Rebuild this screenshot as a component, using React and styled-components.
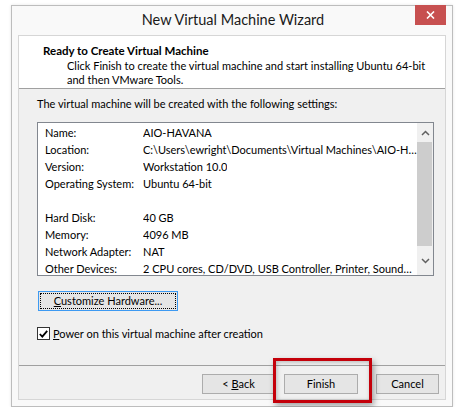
import React from "react";
import styled, { createGlobalStyle } from "styled-components";

const GlobalStyle = createGlobalStyle`
  body {
    margin: 0;
    background: #ffffff;
    font-family: Lato, "Noto Sans", sans-serif;
  }
`;

const Page = styled.div`
  padding: 5px 0 0 11px;
`;

// outer window frame
const Window = styled.div`
  position: relative;
  width: 440px;
  height: 400px;
  border: 1px solid #bdbdbd;
  background: #f9f9f9;
  box-shadow: 0 0 3px rgba(0, 0, 0, 0.1);
  display: flex;
  flex-direction: column;
`;

const TitleBar = styled.div`
  height: 29px;
  display: flex;
  align-items: flex-start;
  justify-content: center;
  position: relative;
`;

const Title = styled.span`
  font-size: 14.5px;
  color: #1a1a1a;
  margin-top: 5px;
  margin-left: 2px;
`;

const CloseBtn = styled.div`
  position: absolute;
  top: -1px;
  right: 6px;
  width: 31px;
  height: 20px;
  background: #c75050;
  color: #fff;
  display: flex;
  align-items: center;
  justify-content: center;
`;

const Client = styled.div`
  margin: 0 6px 6px 6px;
  flex: 1;
  border: 1px solid #d6d6d6;
  background: #f0f0f0;
  display: flex;
  flex-direction: column;
`;

const Header = styled.div`
  background: #ffffff;
  height: 53px;
  border-bottom: 1px solid #a0a0a0;
  padding: 7px 0 0 24px;
  box-sizing: border-box;
  white-space: nowrap;
`;

const HeaderTitle = styled.div`
  font-weight: bold;
  font-size: 11.5px;
  color: #000;
  line-height: 16px;
`;

const HeaderDesc = styled.div`
  font-size: 11px;
  color: #000;
  line-height: 14px;
  padding-left: 24px;
`;

const Body = styled.div`
  flex: 1;
  padding: 7px 10px 0 18px;
  font-size: 11px;
  color: #000;
`;

const Intro = styled.div`
  line-height: 16px;
`;

const ListBox = styled.div`
  margin-top: 10px;
  width: 397px;
  height: 154px;
  box-sizing: border-box;
  border: 1px solid #82878f;
  background: #fff;
  display: flex;
  overflow: hidden;
`;

const Rows = styled.div`
  flex: 1;
  min-width: 0;
  padding: 2px 0 0 7px;
`;

const Row = styled.div`
  display: flex;
  height: 17px;
  line-height: 16px;
  white-space: nowrap;
`;

const Label = styled.span`
  width: 98px;
  flex: none;
`;

const Value = styled.span`
  overflow: hidden;
  text-overflow: ellipsis;
`;

const ScrollBar = styled.div`
  width: 16px;
  flex: none;
  background: #f0f0f0;
  display: flex;
  flex-direction: column;
`;

const Arrow = styled.div`
  height: ${(p) => p.h}px;
  display: flex;
  align-items: center;
  justify-content: center;
`;

const Thumb = styled.div`
  flex: 1;
  background: #cdcdcd;
  margin: 0 1px 0 0;
`;

const Button = styled.div`
  box-sizing: border-box;
  width: ${(p) => p.w}px;
  height: 20px;
  border: 1px solid ${(p) => (p.focused ? "#3d9af2" : "#acacac")};
  background: #e5e5e5;
  display: flex;
  align-items: center;
  justify-content: center;
  font-size: 11px;
  color: #000;
  position: relative;
  padding-bottom: 1px;
  &::after {
    content: "";
    display: ${(p) => (p.focused ? "block" : "none")};
    position: absolute;
    inset: 1px;
    border: 1px dotted #000;
  }
`;

const CustomizeRow = styled.div`
  margin-top: 15px;
  padding-left: 1px;
`;

const CheckRow = styled.label`
  margin-top: 16px;
  display: flex;
  align-items: center;
  gap: 3px;
`;

const CheckBox = styled.div`
  width: 13px;
  height: 13px;
  box-sizing: border-box;
  border: 1px solid #333;
  background: #fff;
  display: flex;
  align-items: center;
  justify-content: center;
`;

const Footer = styled.div`
  border-top: 1px solid #a0a0a0;
  height: 34px;
  display: flex;
  align-items: flex-start;
  padding: 8px 0 0 183px;
  box-sizing: border-box;
`;

const Gap = styled.div`
  width: ${(p) => p.w}px;
`;

const Highlight = styled.div`
  position: absolute;
  left: 261px;
  top: 352px;
  width: 99px;
  height: 45px;
  box-sizing: border-box;
  border: 3px solid #c4000a;
  box-shadow: 2px 3px 6px rgba(0, 0, 0, 0.35), inset 1px 1px 4px rgba(0, 0, 0, 0.25);
`;

const settings = [
  ["Name:", "AIO-HAVANA"],
  ["Location:", "C:\\Users\\ewright\\Documents\\Virtual Machines\\AIO-H\u2026"],
  ["Version:", "Workstation 10.0"],
  ["Operating System:", "Ubuntu 64-bit"],
  ["", ""],
  ["Hard Disk:", "40 GB"],
  ["Memory:", "4096 MB"],
  ["Network Adapter:", "NAT"],
  ["Other Devices:", "2 CPU cores, CD/DVD, USB Controller, Printer, Sound\u2026"],
];

const Chevron = ({ up }) => (
  <svg width="9" height="6" viewBox="0 0 9 6">
    <path
      d={up ? "M1 5 L4.5 1.5 L8 5" : "M1 1 L4.5 4.5 L8 1"}
      fill="none"
      stroke="#606060"
      strokeWidth="1.5"
    />
  </svg>
);

export default function App() {
  return (
    <>
      <GlobalStyle />
      <Page>
        <Window>
          <TitleBar>
            <Title>New Virtual Machine Wizard</Title>
            <CloseBtn>
              <svg width="9" height="8" viewBox="0 0 9 8">
                <path d="M1 0.5 L8 7.5 M8 0.5 L1 7.5" stroke="#fff" strokeWidth="1.6" />
              </svg>
            </CloseBtn>
          </TitleBar>
          <Client>
            <Header>
              <HeaderTitle>Ready to Create Virtual Machine</HeaderTitle>
              <HeaderDesc>
                Click Finish to create the virtual machine and start installing Ubuntu 64-bit
                <br />
                and then VMware Tools.
              </HeaderDesc>
            </Header>
            <Body>
              <Intro>The virtual machine will be created with the following settings:</Intro>
              <ListBox>
                <Rows>
                  {settings.map(([k, v], i) => (
                    <Row key={i}>
                      <Label>{k}</Label>
                      <Value>{v}</Value>
                    </Row>
                  ))}
                </Rows>
                <ScrollBar>
                  <Arrow h={19}>
                    <Chevron up />
                  </Arrow>
                  <Thumb />
                  <Arrow h={29}>
                    <Chevron />
                  </Arrow>
                </ScrollBar>
              </ListBox>
              <CustomizeRow>
                <Button w={140} focused>
                  <span>
                    <u>C</u>ustomize Hardware...
                  </span>
                </Button>
              </CustomizeRow>
              <CheckRow>
                <CheckBox>
                  <svg width="9" height="8" viewBox="0 0 9 8">
                    <path d="M0.8 4 L3.3 6.6 L8.2 0.8" fill="none" stroke="#000" strokeWidth="1.8" />
                  </svg>
                </CheckBox>
                <span>
                  <u>P</u>ower on this virtual machine after creation
                </span>
              </CheckRow>
            </Body>
            <Footer>
              <Button w={73}>
                <span>
                  &lt; <u>B</u>ack
                </span>
              </Button>
              <Gap w={9} />
              <Button w={74}>Finish</Button>
              <Gap w={18} />
              <Button w={63}>Cancel</Button>
            </Footer>
          </Client>
          <Highlight />
        </Window>
      </Page>
    </>
  );
}
